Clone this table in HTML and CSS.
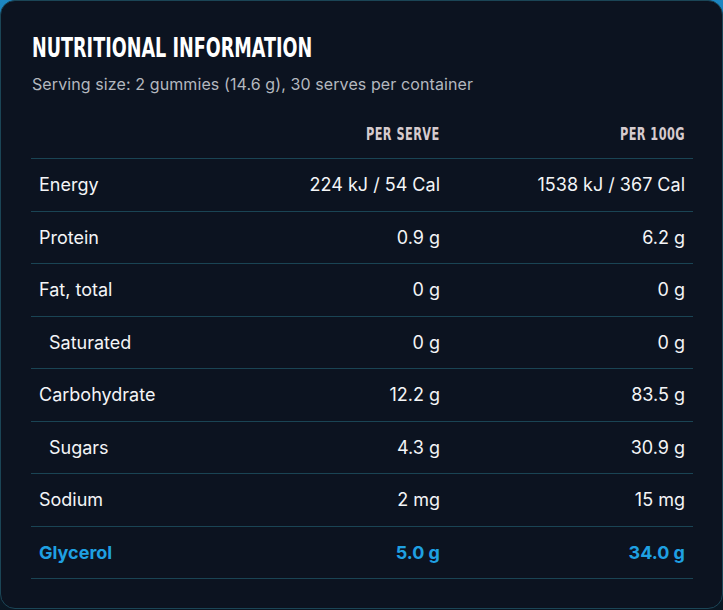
FILE: index.html
```html
<!DOCTYPE html>
<html lang="en">
<head>
<meta charset="utf-8">
<title>Nutritional Information</title>
<link rel="stylesheet" href="styles.css">
</head>
<body>
<section class="card">
  <h2 class="title"><span>NUTRITIONAL INFORMATION</span></h2>
  <p class="serving">Serving size: 2 gummies (14.6 g), 30 serves per container</p>
  <div class="table">
    <div class="row head">
      <div></div>
      <div class="num"><span class="hd">PER SERVE</span></div>
      <div class="num"><span class="hd">PER 100G</span></div>
    </div>
    <div class="row"><div>Energy</div><div class="num">224 kJ / 54 Cal</div><div class="num">1538 kJ / 367 Cal</div></div>
    <div class="row"><div>Protein</div><div class="num">0.9 g</div><div class="num">6.2 g</div></div>
    <div class="row"><div>Fat, total</div><div class="num">0 g</div><div class="num">0 g</div></div>
    <div class="row sub"><div>Saturated</div><div class="num">0 g</div><div class="num">0 g</div></div>
    <div class="row"><div>Carbohydrate</div><div class="num">12.2 g</div><div class="num">83.5 g</div></div>
    <div class="row sub"><div>Sugars</div><div class="num">4.3 g</div><div class="num">30.9 g</div></div>
    <div class="row"><div>Sodium</div><div class="num">2 mg</div><div class="num">15 mg</div></div>
    <div class="row hl"><div>Glycerol</div><div class="num">5.0 g</div><div class="num">34.0 g</div></div>
  </div>
</section>
</body>
</html>
```
FILE: styles.css
```css
* { box-sizing: border-box; }
html, body { margin: 0; padding: 0; }
body {
  width: 723px;
  height: 610px;
  background: linear-gradient(180deg, #1c86c2 0%, #125a86 40%, #0a1622 100%);
  font-family: Inter, "Noto Sans", sans-serif;
}
.card {
  height: 609px;
  background: #0c1320;
  border: 1px solid #1b4556;
  border-radius: 15px;
  padding: 30px 29px 0 30px;
}
.title {
  margin: 0;
  height: 34px;
  font-family: "DejaVu Sans Condensed", "Liberation Sans", sans-serif;
  font-weight: 700;
  font-size: 27px;
  line-height: 34px;
  color: #ffffff;
  white-space: nowrap;
}
.title span {
  display: inline-block;
  transform: scaleX(0.725);
  transform-origin: left center;
  margin-left: 1px;
}
.serving {
  margin: 8px 0 0 1px;
  font-size: 16px;
  letter-spacing: 0.1px;
  line-height: 22px;
  color: #b4b8bf;
}
.table {
  margin-top: 28px;
}
.row {
  display: grid;
  grid-template-columns: 1fr 172px 245px;
  border-bottom: 1px solid #1a4454;
  padding: 14px 8px;
  font-size: 18px;
  line-height: 23.5px;
  color: #f4f5f7;
}
.row .num { text-align: right; }
.head {
  padding-top: 0;
  padding-bottom: 13px;
  line-height: 22px;
}
.hd {
  display: inline-block;
  font-family: "DejaVu Sans Condensed", "Liberation Sans", sans-serif;
  font-weight: 700;
  font-size: 17px;
  letter-spacing: 0.6px;
  color: #d6cbce;
  transform: scaleX(0.74);
  transform-origin: right center;
}
.sub > div:first-child { padding-left: 10px; }
.hl { color: #1fa0e2; font-weight: 700; }
```
